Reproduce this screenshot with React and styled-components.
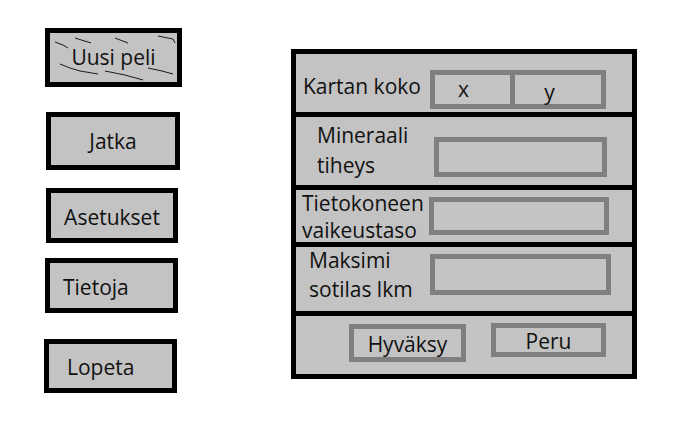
import React from "react";
import styled, { createGlobalStyle } from "styled-components";

const GlobalStyle = createGlobalStyle`
  html, body {
    margin: 0;
    padding: 0;
    background: #ffffff;
  }
  body {
    font-family: "Open Sans", "Liberation Sans", sans-serif;
    font-size: 21px;
    color: #111111;
  }
`;

const menuItems = [
  { label: "Uusi peli", w: 137, h: 59, mt: 28, ml: 45, dy: -1, hatch: true },
  { label: "Jatka", w: 134, h: 58, mt: 25, ml: 46, dy: 0 },
  { label: "Asetukset", w: 132, h: 55, mt: 18, ml: 46, dy: 1 },
  { label: "Tietoja", w: 133, h: 55, mt: 15, ml: 45, dy: 1, pad: 13 },
  { label: "Lopeta", w: 133, h: 54, mt: 26, ml: 44, dy: 0.5, pad: 18 },
];

const fields = [
  { lines: ["Mineraali", "tiheys"], indent: 21, lmt: 3, lh: 30, h: 73, dx: 4, fmt: 20, fw: 173, fh: 40 },
  { lines: ["Tietokoneen", "vaikeustaso"], indent: 6, lmt: 0, lh: 27, h: 57, dx: -1, fmt: 7, fw: 180, fh: 38 },
  { lines: ["Maksimi", "sotilas lkm"], indent: 13, lmt: -1, lh: 29, h: 69, dx: 0, fmt: 7, fw: 181, fh: 41 },
];

const Hatch = () => (
  <HatchSvg width="137" height="59" viewBox="0 0 137 59">
    <g fill="none" stroke="#1a1a1a" strokeWidth="1">
      <polyline points="10,14 18,17 23,20" />
      <polyline points="30,10 46,15" />
      <polyline points="70,10 83,15" />
      <polyline points="113,8 128,11 130,15" />
      <polyline points="15,36 25,40 35,43 53,46" />
      <polyline points="60,43 80,47 98,52" />
      <polyline points="103,40 117,43 128,46" />
    </g>
  </HatchSvg>
);

export default function App() {
  return (
    <>
      <GlobalStyle />
      <Page>
        <Menu>
          {menuItems.map((item) => (
            <MenuButton
              key={item.label}
              $w={item.w}
              $h={item.h}
              $mt={item.mt}
              $ml={item.ml}
              $dy={item.dy}
              $pad={item.pad}
            >
              {item.label}
              {item.hatch && <Hatch />}
            </MenuButton>
          ))}
        </Menu>

        <Panel>
          <Row $h={58} $first>
            <Label $indent={7} $mt={19} $lh={27}>Kartan koko</Label>
            <Field $mt={16} $w={176} $h={39}>
              <Cell $w={75} $padR={18} $padT={0}>x</Cell>
              <Cell $padR={17} $padT={5}>y</Cell>
            </Field>
          </Row>
          {fields.map((f) => (
            <Row key={f.lines[0]} $h={f.h}>
              <Label $indent={f.indent} $mt={f.lmt} $lh={f.lh}>
                {f.lines[0]}
                <br />
                {f.lines[1]}
              </Label>
              <Field $mt={f.fmt} $ml={f.dx} $w={f.fw} $h={f.fh} />
            </Row>
          ))}
          <ActionRow>
            <ActionButton $w={117} $h={38} $mt={8}>Hyväksy</ActionButton>
            <ActionButton $w={115} $h={34} $mt={7}>Peru</ActionButton>
          </ActionRow>
        </Panel>
      </Page>
    </>
  );
}

const Page = styled.div`
  display: flex;
  align-items: flex-start;
  width: 693px;
  height: 433px;
  overflow: hidden;
`;

const Menu = styled.div`
  display: flex;
  flex-direction: column;
  align-items: flex-start;
`;

const MenuButton = styled.div`
  position: relative;
  box-sizing: border-box;
  width: ${(p) => p.$w}px;
  height: ${(p) => p.$h}px;
  margin-top: ${(p) => p.$mt}px;
  margin-left: ${(p) => p.$ml}px;
  border: 5px solid #000;
  background: #c3c3c3;
  display: flex;
  align-items: center;
  justify-content: ${(p) => (p.$pad ? "flex-start" : "center")};
  padding-left: ${(p) => p.$pad || 0}px;
  padding-top: ${(p) => Math.max(p.$dy, 0) * 2}px;
  padding-bottom: ${(p) => Math.max(-p.$dy, 0) * 2}px;
`;

const HatchSvg = styled.svg`
  position: absolute;
  left: -5px;
  top: -5px;
  pointer-events: none;
`;

const Panel = styled.div`
  box-sizing: border-box;
  width: 346px;
  height: 330px;
  margin-top: 49px;
  margin-left: 109px;
  border: 5px solid #000;
  background: #c3c3c3;
  display: flex;
  flex-direction: column;
`;

const Row = styled.div`
  box-sizing: border-box;
  height: ${(p) => p.$h}px;
  flex: 0 0 auto;
  border-top: ${(p) => (p.$first ? "none" : "5px solid #000")};
  display: flex;
  align-items: flex-start;
`;

const Label = styled.div`
  box-sizing: border-box;
  flex: 0 0 134px;
  padding-left: ${(p) => p.$indent}px;
  margin-top: ${(p) => p.$mt}px;
  line-height: ${(p) => p.$lh}px;
  white-space: nowrap;
`;

const Field = styled.div`
  box-sizing: border-box;
  display: flex;
  width: ${(p) => p.$w}px;
  height: ${(p) => p.$h}px;
  margin-top: ${(p) => p.$mt}px;
  margin-left: ${(p) => p.$ml || 0}px;
  border: 5px solid #7f7f7f;
`;

const Cell = styled.div`
  box-sizing: border-box;
  flex: ${(p) => (p.$w ? `0 0 ${p.$w + 5}px` : "1 1 auto")};
  border-right: ${(p) => (p.$w ? "5px solid #7f7f7f" : "none")};
  display: flex;
  align-items: center;
  justify-content: center;
  padding-right: ${(p) => p.$padR}px;
  padding-top: ${(p) => p.$padT}px;
  line-height: 1;
`;

const ActionRow = styled.div`
  box-sizing: border-box;
  flex: 1 1 auto;
  border-top: 5px solid #000;
  display: flex;
  align-items: flex-start;
  gap: 25px;
  padding-left: 53px;
`;

const ActionButton = styled.div`
  box-sizing: border-box;
  width: ${(p) => p.$w}px;
  height: ${(p) => p.$h}px;
  margin-top: ${(p) => p.$mt}px;
  border: 5px solid #7f7f7f;
  display: flex;
  align-items: center;
  justify-content: center;
  padding-top: 2px;
`;
